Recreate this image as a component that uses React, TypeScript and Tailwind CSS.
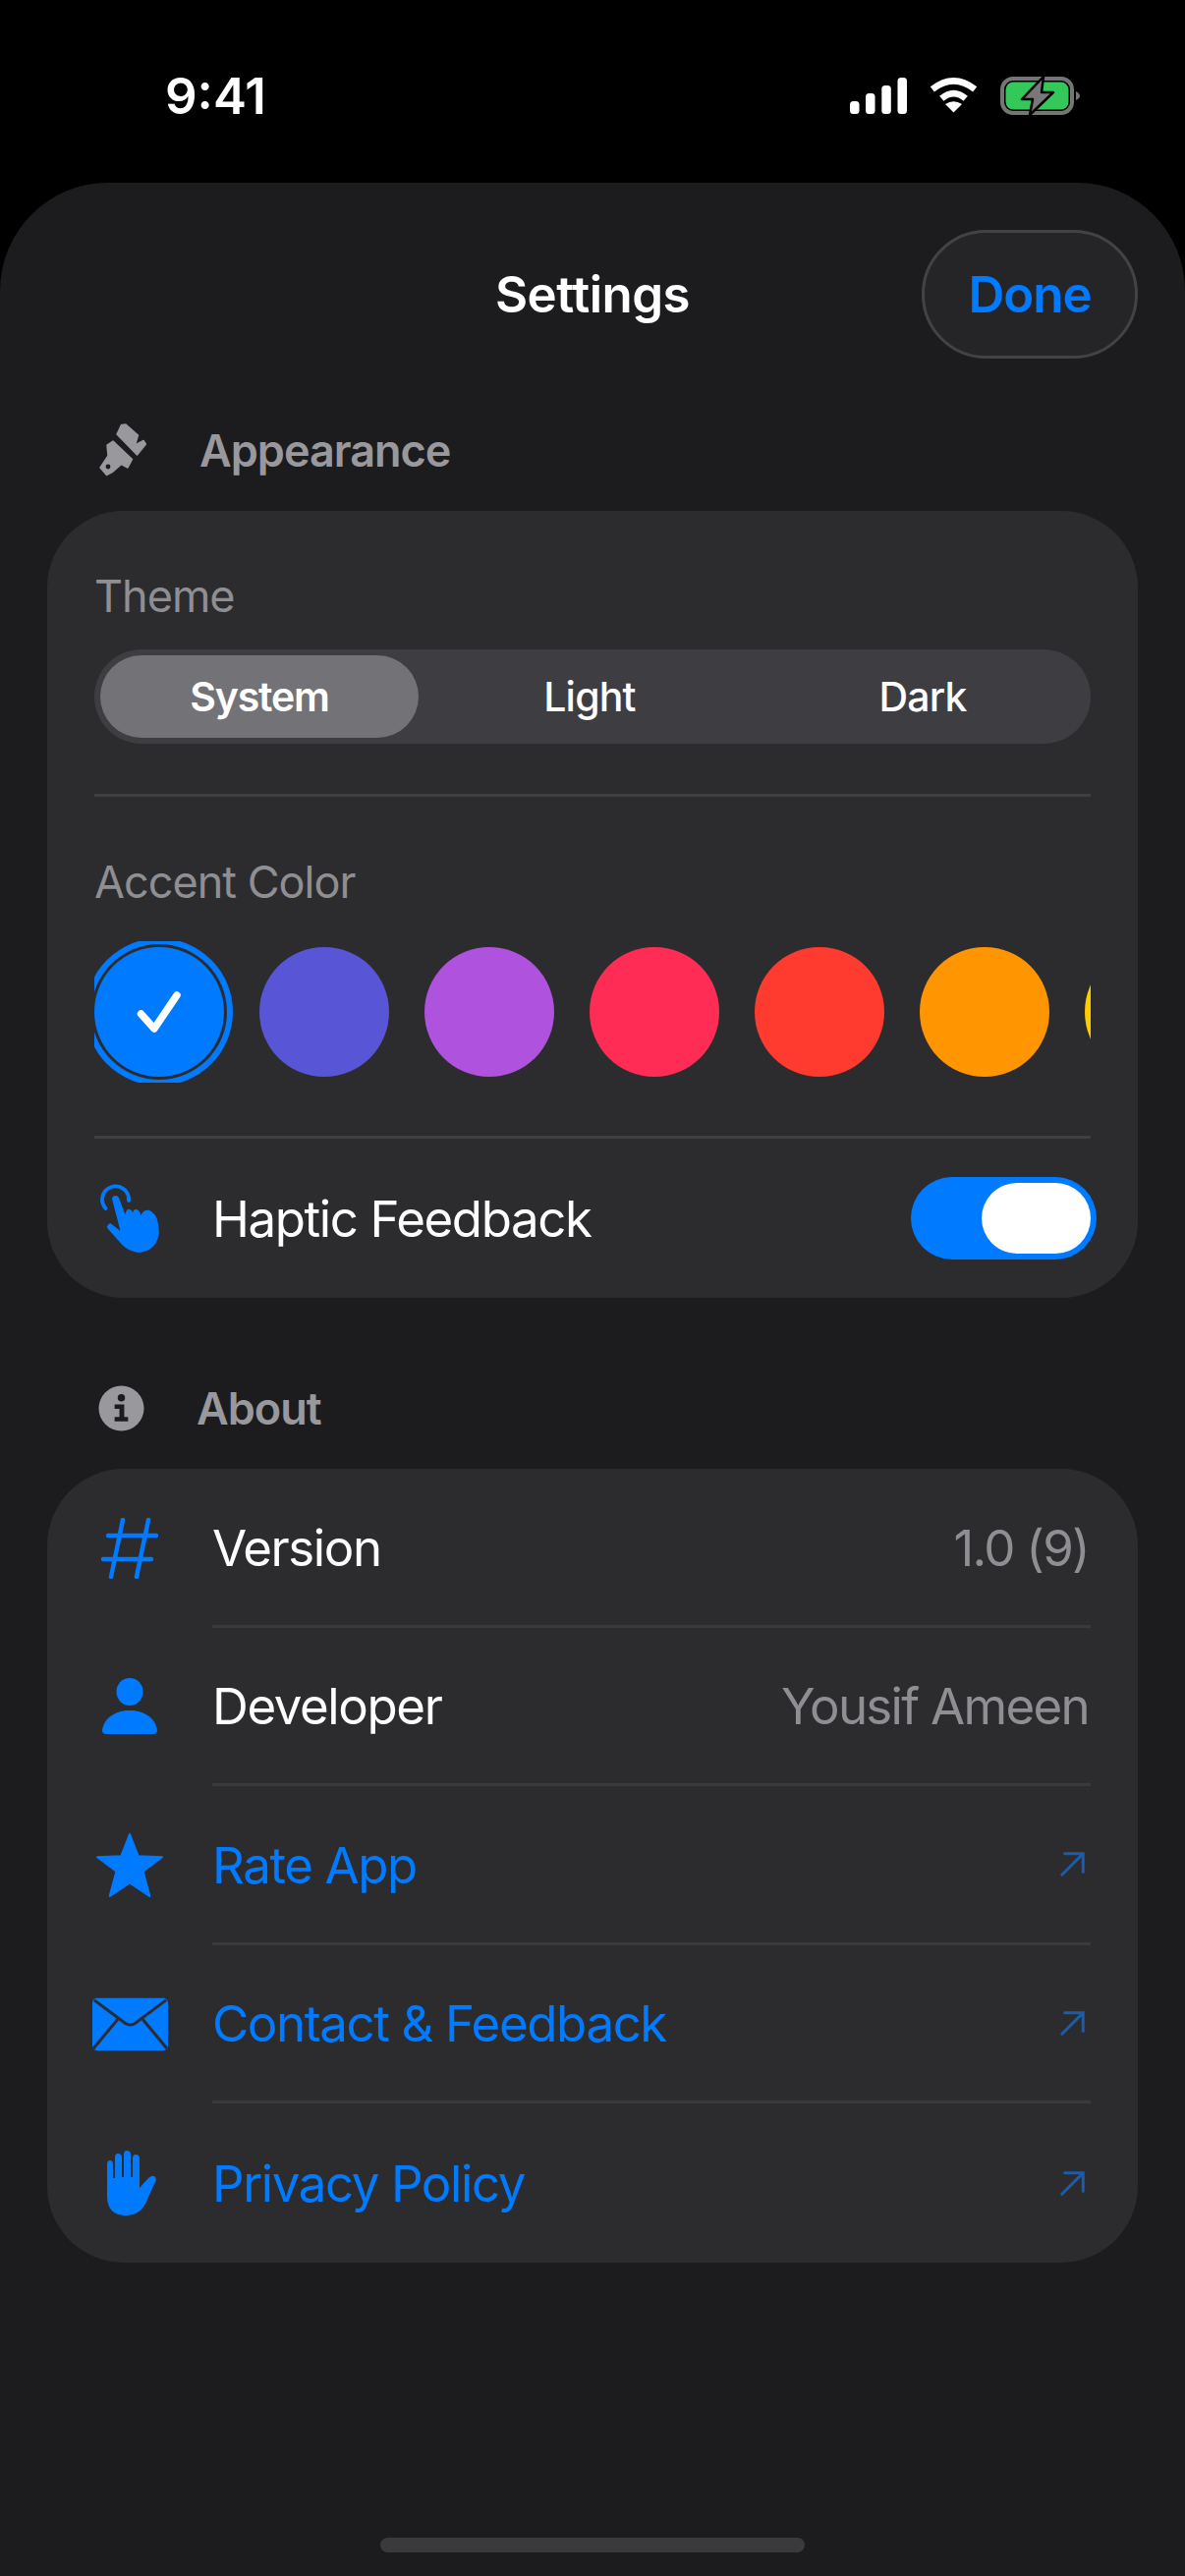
import React from "react";

function Brush() {
  return (
    <svg width="48" height="54" viewBox="0 0 48 54" fill="#98989d" stroke="#98989d" strokeWidth="1.500" strokeLinejoin="round">
      <path d="M18 11 L22.500 1.500 L27 1 L39.500 12 L36.500 22 L45 17.500 L47.500 21 L38.500 32 Z" />
      <path d="M8 22 L14 18 L33.500 36.500 L29 45 L22.500 41.500 L14 49 L7.500 52.500 L1 45 L9 33 Z" />
      <circle cx="9" cy="44" r="2.400" fill="#1c1c1e" stroke="none" />
    </svg>
  );
}

function Row({ icon, label, value, link, last }: { icon: React.ReactNode; label: string; value?: string; link?: boolean; last?: boolean }) {
  return (
    <div className="flex h-[161.5px] items-stretch">
      <div className="flex w-[168px] shrink-0 items-center justify-center">{icon}</div>
      <div className={`mr-[48px] flex flex-1 items-center justify-between ${last ? "" : "border-b-[3px] border-[#3a3a3c]"}`}>
        <span className={`mt-[2px] text-[51px] leading-none tracking-[-1.4px] ${link ? "text-[#007aff]" : "text-white"}`}>{label}</span>
        {value && <span className="mr-[2px] mt-[2px] text-[51px] leading-none tracking-[-1.7px] text-[#8e8e93]">{value}</span>}
        {link && (
          <svg className="mr-[4px]" width="28" height="28" viewBox="0 0 30 30" fill="none" stroke="#1c5ca8" strokeWidth="3.2" strokeLinecap="round">
            <path d="M3 27 L26 4 M6 4 H26 V24" />
          </svg>
        )}
      </div>
    </div>
  );
}

const swatches = ["bg-[#5856d6]", "bg-[#af52de]", "bg-[#ff2d55]", "bg-[#ff3b30]", "bg-[#ff9500]", "bg-[#ffcc00]"];

export default function App() {
  return (
    <div className="flex h-[2622px] w-[1206px] flex-col overflow-hidden bg-black text-white [font-family:Inter,'Liberation_Sans',sans-serif]">
      <div className="flex h-[186px] shrink-0 items-start justify-between pl-[168px] pr-[107px] pt-[70px]">
        <span className="text-[51px] font-semibold leading-[56px]">9:41</span>
        <div className="flex items-center gap-[23px] pt-[7px]">
          <svg width="58" height="37" viewBox="0 0 58 37" fill="#fff">
            <rect x="0" y="24" width="9.5" height="13" rx="3.5" />
            <rect x="16" y="16" width="9.5" height="21" rx="3.5" />
            <rect x="32.300" y="8" width="9.500" height="29" rx="3.5" />
            <rect x="48.500" y="0" width="9.500" height="37" rx="3.5" />
          </svg>
          <svg width="49" height="37" viewBox="0 0 52 38" fill="none" stroke="#fff" strokeWidth="7">
            <path d="M3 12 Q26 -6 49 12" />
            <path d="M13 22 Q26 11 39 22" />
            <path d="M26 37 L17 28 Q26 22 35 28 Z" fill="#fff" stroke="none" />
          </svg>
          <svg width="81" height="41" viewBox="0 0 81 41">
            <rect x="2" y="3" width="71" height="35" rx="11" fill="none" stroke="#757575" strokeWidth="4" />
            <rect x="5.500" y="6.500" width="64" height="28" rx="8" fill="#34c759" />
            <path d="M77 16 Q81 18 81 20.500 Q81 23 77 25 Z" fill="#757575" />
            <path d="M44 1 L22 24 H33 L30 40 L54 17 H42 Z" fill="#787878" stroke="#000" strokeWidth="2.500" strokeLinejoin="round" />
          </svg>
        </div>
      </div>

      <div className="flex flex-1 flex-col rounded-t-[110px] bg-[#1c1c1e]">
        <div className="relative h-[178px] shrink-0">
          <span className="absolute left-0 right-0 top-[83px] text-center text-[51px] font-semibold leading-[62px] tracking-[-0.5px]">Settings</span>
          <div className="absolute right-[48px] top-[48px] flex h-[131px] w-[220px] items-center justify-center rounded-[66px] border-[3px] border-[#434346] bg-[#252527]">
            <span className="text-[51px] font-semibold leading-none tracking-[-1px] text-[#007aff]">Done</span>
          </div>
        </div>

        <div className="flex h-[156px] items-center pl-[101px] pt-[32px]">
          <Brush />
          <span className="ml-[54px] text-[45px] font-semibold leading-none tracking-[-1px] text-[#98989d]">Appearance</span>
        </div>

        <div className="mx-[48px] h-[801px] rounded-[78px] bg-[#2c2c2e] px-[48px] pt-[59px]">
          <div className="text-[45px] leading-[56px] tracking-[-1px] text-[#8e8e93]">Theme</div>
          <div className="mt-[26px] flex h-[96px] rounded-[48px] bg-[#3e3e42] p-[6px]">
            <div className="flex w-[324px] items-center justify-center rounded-[42px] bg-[#737377] pt-[1px] text-[41px] font-semibold tracking-[-1.2px]">System</div>
            <div className="flex w-[348px] items-center justify-center pt-[1px] text-[41px] font-medium tracking-[-0.8px]">Light</div>
            <div className="flex flex-1 items-center justify-center pt-[1px] text-[41px] font-medium tracking-[-0.8px]">Dark</div>
          </div>
          <div className="mt-[51px] h-[3px] bg-[#3f3f42]" />
          <div className="mt-[59px] text-[45px] leading-[56px] tracking-[-1px] text-[#8e8e93]">Accent Color</div>
          <div className="mt-[32px] flex h-[144px] items-center gap-[36px] overflow-hidden">
            <div className="flex h-[132px] w-[132px] shrink-0 items-center justify-center rounded-full bg-[#007aff] shadow-[0_0_0_3px_#2c2c2e,0_0_0_9px_#007aff]">
              <svg width="60" height="60" viewBox="0 0 60 60" fill="none" stroke="#fff" strokeWidth="7.500" strokeLinecap="round" strokeLinejoin="round">
                <path d="M11.500 32 L25 47 L48 13" />
              </svg>
            </div>
            {swatches.map((c) => (
              <div key={c} className={`h-[132px] w-[132px] shrink-0 rounded-full ${c}`} />
            ))}
          </div>
          <div className="mt-[54px] h-[3px] bg-[#3f3f42]" />
          <div className="flex h-[162px] items-center justify-between">
            <div className="flex items-center">
              <div className="flex w-[121px] shrink-0 items-center pl-[6px]">
                <svg width="60" height="70" viewBox="0 0 60 70" fill="#007aff" strokeLinejoin="round">
                  <path d="M5.500 25 A13.500 13.500 0 1 1 29 17" fill="none" stroke="#007aff" strokeWidth="3.800" strokeLinecap="round" />
                  <path d="M12 15.300 Q12.500 12 15.300 12 Q18 12 19 14.300 L25.300 31 Q27 25 30 26 Q32.500 27 33 29.300 Q34 25.500 37 26 Q40.500 27.500 41.300 32 Q44 26 49.700 26.700 Q56 30 58 36 Q60 44 59.700 51 Q57 68 39.700 70 Q30 69 23 62.700 L8 46 Q6 43 7.300 42.700 Q9 39.500 10.700 40.300 L20.500 48 Z" />
                </svg>
              </div>
              <span className="-ml-[1px] text-[51px] leading-none tracking-[-1.4px]">Haptic Feedback</span>
            </div>
            <div className="flex h-[84px] w-[189px] translate-x-[6px] items-center justify-end rounded-[42px] bg-[#007aff] pr-[6px]">
              <div className="h-[72px] w-[111px] rounded-[36px] bg-white" />
            </div>
          </div>
        </div>

        <div className="flex h-[174px] items-center pl-[100px] pt-[50px]">
          <svg width="47" height="47" viewBox="0 0 48 48">
            <circle cx="24" cy="24" r="23.500" fill="#98989d" />
            <circle cx="24" cy="13" r="3.800" fill="#1c1c1e" />
            <path d="M17 20 H27 V33 H31 V37.500 H17 V33 H22 V24.500 H17 Z" fill="#1c1c1e" />
          </svg>
          <span className="ml-[53px] text-[45px] font-semibold leading-none tracking-[-1px] text-[#98989d]">About</span>
        </div>

        <div className="mx-[48px] h-[808px] rounded-[78px] bg-[#2c2c2e]">
          <Row
            label="Version"
            value="1.0 (9)"
            icon={
              <svg width="58" height="62" viewBox="0 0 58 62" fill="none" stroke="#007aff" strokeWidth="4.500" strokeLinecap="round">
                <path d="M22 2 L10 60 M48 2 L36 60 M7 18 H56 M2 42 H51" />
              </svg>
            }
          />
          <Row
            label="Developer"
            value="Yousif Ameen"
            icon={
              <svg width="56" height="58" viewBox="0 0 56 58" fill="#007aff">
                <ellipse cx="28" cy="14" rx="13.500" ry="14" />
                <path d="M0 53 C2 40 14 33 28 33 C42 33 54 40 56 53 Q56 57 52 57 H4 Q0 57 0 53 Z" />
              </svg>
            }
          />
          <Row
            label="Rate App"
            link
            icon={
              <svg width="72" height="68" viewBox="0 0 72 70" fill="#007aff" stroke="#007aff" strokeWidth="2" strokeLinejoin="round">
                <path d="M36 2 L45 25 L70 26 L50 41 L57 67 L36 53 L15 67 L22 41 L2 26 L27 25 Z" />
              </svg>
            }
          />
          <Row
            label="Contact & Feedback"
            link
            icon={
              <svg width="77" height="55" viewBox="0 0 78 54">
                <rect width="78" height="54" rx="5" fill="#007aff" />
                <path d="M2 2 L34 26 Q39 29 44 26 L76 2 M1 52 L26 22 M77 52 L52 22" fill="none" stroke="#2c2c2e" strokeWidth="3" />
              </svg>
            }
          />
          <Row
            label="Privacy Policy"
            link
            last
            icon={
              <svg className="ml-[4px]" width="52" height="68" viewBox="0 0 52 66" fill="#007aff">
                <path d="M1 14 Q1 10 4 10 Q7 10 7 14 V28 H9 V7 Q9 3 12 3 Q16 3 16 7 V27 H18 V4 Q18 0 21 0 Q25 0 25 4 V27 H27 V8 Q27 4 30 4 Q34 4 34 8 V38 L43 28 Q48 24 50 27 Q52 30 49 34 L40 54 Q34 66 20 66 Q1 66 1 46 Z" />
              </svg>
            }
          />
        </div>

        <div className="flex flex-1 items-end justify-center pb-[24px]">
          <div className="h-[15px] w-[432px] rounded-full bg-[#3a3a3a]" />
        </div>
      </div>
    </div>
  );
}
